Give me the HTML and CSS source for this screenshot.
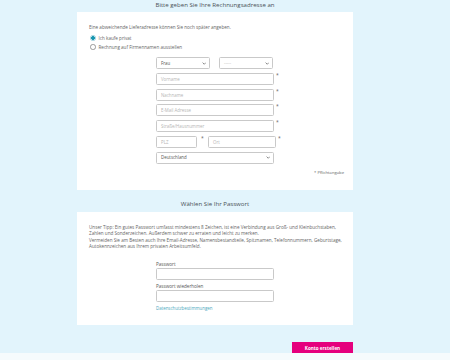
FILE: index.html
```html
<!DOCTYPE html>
<html lang="de">
<head>
<meta charset="utf-8">
<title>Konto erstellen</title>
<link rel="stylesheet" href="styles.css">
</head>
<body>
<div class="page">
  <main class="column">
    <h2 class="section-title">Bitte geben Sie Ihre Rechnungsadresse an</h2>
    <section class="card card-address">
      <p class="hint">Eine abweichende Lieferadresse können Sie noch später angeben.</p>
      <div class="radios">
        <label class="radio"><span class="dot checked"></span>Ich kaufe privat</label>
        <label class="radio"><span class="dot"></span>Rechnung auf Firmennamen ausstellen</label>
      </div>
      <div class="fields">
        <div class="row">
          <div class="select half"><span class="val">Frau</span><svg class="chev" viewBox="0 0 6 4"><path d="M0.8 0.8 L3 3 L5.2 0.8" fill="none" stroke="#555" stroke-width="0.9"/></svg></div>
          <div class="select half"><span class="val muted">-----</span><svg class="chev" viewBox="0 0 6 4"><path d="M0.8 0.8 L3 3 L5.2 0.8" fill="none" stroke="#555" stroke-width="0.9"/></svg></div>
        </div>
        <div class="row"><div class="input full">Vorname</div><span class="req">*</span></div>
        <div class="row"><div class="input full">Nachname</div><span class="req">*</span></div>
        <div class="row"><div class="input full">E-Mail Adresse</div><span class="req">*</span></div>
        <div class="row"><div class="input full">Straße/Hausnummer</div><span class="req">*</span></div>
        <div class="row"><div class="input plz">PLZ</div><span class="req req-mid">*</span><div class="input ort">Ort</div><span class="req">*</span></div>
        <div class="row">
          <div class="select full"><span class="val">Deutschland</span><svg class="chev" viewBox="0 0 6 4"><path d="M0.8 0.8 L3 3 L5.2 0.8" fill="none" stroke="#555" stroke-width="0.9"/></svg></div>
        </div>
      </div>
      <p class="required-note">* Pflichtangabe</p>
    </section>

    <h2 class="section-title second">Wählen Sie Ihr Passwort</h2>
    <section class="card card-password">
      <p class="tip"><span class="line">Unser Tipp: Ein gutes Passwort umfasst mindestens 8 Zeichen, ist eine Verbindung aus Groß- und Kleinbuchstaben,</span><span class="line">Zahlen und Sonderzeichen. Außerdem schwer zu erraten und leicht zu merken.</span><span class="line">Vermeiden Sie am Besten auch Ihre Email-Adresse, Namensbestandteile, Spitznamen, Telefonnummern, Geburtstage,</span><span class="line">Autokennzeichen aus Ihrem privaten Arbeitsumfeld.</span></p>
      <div class="pw-fields">
        <label class="pw-label">Passwort</label>
        <div class="input full"></div>
        <label class="pw-label">Passwort wiederholen</label>
        <div class="input full"></div>
        <a class="link" href="#">Datenschutzbestimmungen</a>
      </div>
    </section>

    <div class="actions">
      <button class="submit" type="button">Konto erstellen</button>
    </div>
  </main>
</div>
</body>
</html>
```

FILE: styles.css
```css
* { box-sizing: border-box; }
html, body {
  margin: 0;
  padding: 0;
  background: #f6fbfd;
  font-family: "Open Sans", "Noto Sans", sans-serif;
  color: #555;
}
.page {
  background: #e2f4fc;
  height: 353px;
}
.column {
  width: 276px;
  margin-left: 77px;
  display: flex;
  flex-direction: column;
}
.section-title {
  margin: 0;
  height: 12px;
  line-height: 9px;
  font-size: 6.1px;
  font-weight: 400;
  color: #4a5157;
  text-align: center;
}
.section-title.second {
  margin-top: 9px;
  height: 13px;
}
.card {
  background: #fff;
}
.card-address {
  height: 178px;
  padding: 12px 9px 0 12px;
  display: flex;
  flex-direction: column;
}
.hint {
  margin: 0;
  font-size: 4.62px;
  line-height: 6px;
  color: #666;
}
.radios {
  margin-top: 5px;
  display: flex;
  flex-direction: column;
  gap: 3px;
}
.radio {
  display: flex;
  align-items: center;
  gap: 3px;
  height: 6px;
  font-size: 4.6px;
  color: #666;
  margin-left: 1px;
}
.dot {
  width: 5.5px;
  height: 5.5px;
  border-radius: 50%;
  border: 0.6px solid #999;
  background: #fff;
  flex: none;
}
.dot.checked {
  border-color: #9ccfdc;
  background: radial-gradient(circle, #1796b0 0 1.7px, #fff 1.9px);
}
.fields {
  margin-top: 7px;
  margin-left: 67px;
  display: flex;
  flex-direction: column;
  gap: 3.8px;
}
.row {
  display: flex;
  align-items: flex-start;
  height: 12px;
}
.input, .select {
  height: 12px;
  border: 0.7px solid #c9c9c9;
  border-radius: 1.5px;
  background: #fff;
  font-size: 4.4px;
  line-height: 10.6px;
  padding: 0 4px;
  color: #b5b5b5;
}
.select {
  display: flex;
  align-items: center;
  justify-content: space-between;
  color: #555;
  padding-right: 3px;
}
.select .val { line-height: 10.6px; }
.select .val.muted { color: #bbb; }
.chev { width: 4.5px; height: 3px; }
.half { width: 54px; }
.half + .half { margin-left: 9px; }
.full { width: 118px; }
.plz { width: 41px; }
.ort { width: 68px; margin-left: 6px; }
.req {
  font-size: 5px;
  line-height: 5px;
  margin-left: 2px;
  color: #666;
}
.req-mid { margin-left: 4px; width: 1px; }
.required-note {
  margin: 6px 0 0;
  text-align: right;
  font-size: 4.2px;
  line-height: 6px;
  color: #666;
}
.card-password {
  height: 113px;
  padding: 12px 4px 0 12px;
}
.tip {
  margin: 0;
  font-size: 4.62px;
  line-height: 6.35px;
  color: #666;
  display: flex;
  flex-direction: column;
}
.tip .line { white-space: nowrap; }
.pw-fields {
  margin-left: 67px;
  margin-top: 12px;
  display: flex;
  flex-direction: column;
}
.pw-label {
  font-size: 4.6px;
  line-height: 6px;
  color: #555;
  margin-bottom: 1px;
}
.pw-fields .input + .pw-label { margin-top: 3px; }
.link {
  margin-top: 3px;
  font-size: 4.4px;
  line-height: 6px;
  color: #4aa7bd;
  text-decoration: none;
}
.actions {
  display: flex;
  justify-content: flex-end;
  margin-top: 17px;
}
.submit {
  width: 61px;
  height: 11px;
  border: 0;
  border-radius: 0;
  background: #e5007d;
  color: #fff;
  font-family: "Open Sans", "Noto Sans", sans-serif;
  font-size: 4.6px;
  font-weight: 700;
  padding: 0;
}
```
